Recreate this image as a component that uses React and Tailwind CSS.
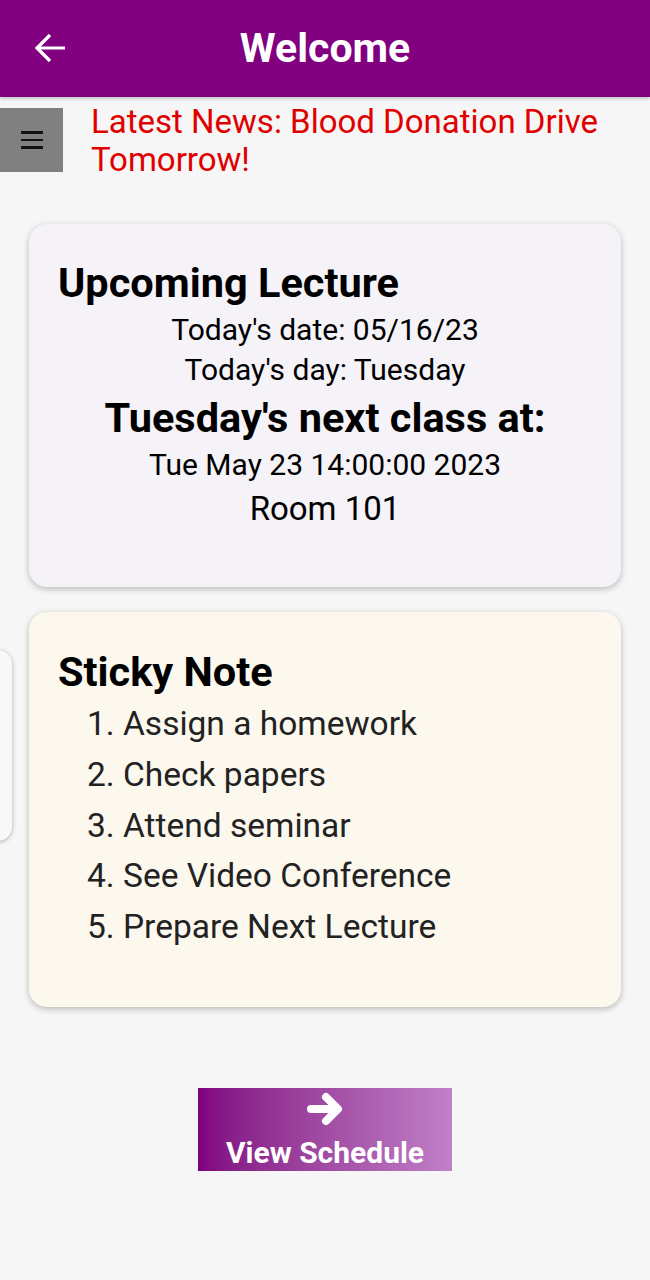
import React from "react";

export default function App() {
  const items = [
    "Assign a homework",
    "Check papers",
    "Attend seminar",
    "See Video Conference",
    "Prepare Next Lecture",
  ];
  return (
    <div
      className="relative w-[650px] h-[1280px] bg-[#f6f6f6] overflow-hidden"
      style={{ fontFamily: "Roboto, 'Noto Sans', sans-serif" }}
    >
      <header className="h-[97px] bg-[#800080] flex items-center relative shadow-[0_2px_3px_rgba(0,0,0,0.2)]">
        <svg
          className="absolute left-[34px] top-[33px]"
          width="31"
          height="30"
          viewBox="0 0 31 30"
          fill="none"
          stroke="white"
          strokeWidth="3.2"
        >
          <path d="M31 15H3M16 2L3 15l13 13" />
        </svg>
        <h1 className="w-full text-center text-white font-bold text-[41px] leading-none">
          Welcome
        </h1>
      </header>

      <div className="flex items-start mt-[11px]">
        <div className="w-[63px] h-[64px] bg-[#808080] flex items-center justify-center shrink-0">
          <div className="flex flex-col gap-[5px] w-[22px]">
            <div className="h-[2.5px] bg-[#111]" />
            <div className="h-[2.5px] bg-[#111]" />
            <div className="h-[2.5px] bg-[#111]" />
          </div>
        </div>
        <p className="ml-[28px] text-[#e00000] text-[33px] leading-[38px] mt-[-5px]">
          Latest News: Blood Donation Drive Tomorrow!
        </p>
      </div>

      <div className="mx-[29px] mt-[45px] h-[363px] rounded-[18px] bg-[#f5f2f8] shadow-[0_2px_6px_rgba(0,0,0,0.25)] px-[29px] pt-[37px]">
        <h2 className="text-[41.5px] font-bold text-black leading-[44px]">Upcoming Lecture</h2>
        <div className="flex flex-col items-center text-black">
          <p className="text-[30px] leading-[40px] mt-[5px]">Today's date: 05/16/23</p>
          <p className="text-[30px] leading-[40px]">Today's day: Tuesday</p>
          <p className="text-[41.5px] font-bold leading-[48px] mt-[4px]">Tuesday's next class at:</p>
          <p className="text-[30px] leading-[40px] mt-[3px]">Tue May 23 14:00:00 2023</p>
          <p className="text-[33px] leading-[44px] mt-[2px]">Room 101</p>
        </div>
      </div>

      <div className="mx-[29px] mt-[25px] h-[395px] rounded-[18px] bg-[#fcf8ee] shadow-[0_2px_6px_rgba(0,0,0,0.25)] px-[29px] pt-[38px]">
        <h2 className="text-[41.5px] font-bold text-black leading-[44px]">Sticky Note</h2>
        <ol className="mt-[5px] pl-[29px] text-[33.5px] text-[#222] leading-[50.75px]">
          {items.map((t, i) => (
            <li key={i}>
              {i + 1}. {t}
            </li>
          ))}
        </ol>
      </div>

      <div className="absolute left-[-20px] top-[650px] w-[32px] h-[191px] rounded-r-[14px] bg-[#f8f8f8] shadow-[0_1px_4px_rgba(0,0,0,0.3)]" />

      <div className="flex justify-center mt-[81px]">
        <button className="w-[254px] h-[83px] bg-gradient-to-r from-[#800080] to-[#c080c8] flex flex-col items-center justify-start pt-[2px] text-white">
          <svg width="40" height="38" viewBox="0 0 40 38" fill="none" stroke="white" strokeWidth="8" strokeLinecap="round" strokeLinejoin="round">
            <path d="M6 19h26M21 7l12 12-12 12" />
          </svg>
          <span className="text-[30px] font-bold leading-[34px] mt-[8px]">View Schedule</span>
        </button>
      </div>
    </div>
  );
}
